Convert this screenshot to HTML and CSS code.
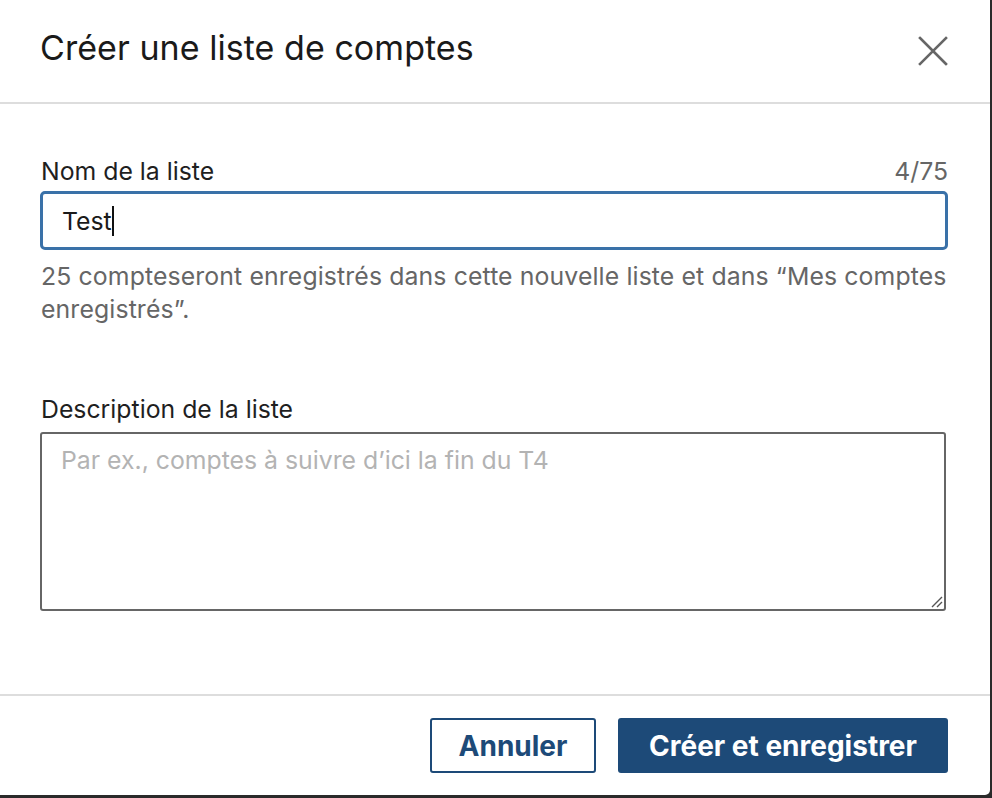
FILE: index.html
```html
<!DOCTYPE html>
<html lang="fr">
<head>
<meta charset="utf-8">
<title>Créer une liste de comptes</title>
<link rel="stylesheet" href="styles.css">
</head>
<body>
<div class="modal">
  <header class="modal-header">
    <h1 class="modal-title">Créer une liste de comptes</h1>
    <button class="close-btn" aria-label="Fermer">
      <svg width="30" height="30" viewBox="0 0 30 30"><path d="M2 2 L28 28 M28 2 L2 28" stroke="#666666" stroke-width="2.6" stroke-linecap="square" fill="none"/></svg>
    </button>
  </header>
  <main class="modal-body">
    <div class="field">
      <div class="label-row">
        <label class="label" for="name">Nom de la liste</label>
        <span class="counter">4/75</span>
      </div>
      <div class="input"><span class="input-text">Test</span><span class="caret"></span></div>
      <p class="helper">25 compteseront enregistrés dans cette nouvelle liste et dans “Mes comptes enregistrés”.</p>
    </div>
    <div class="field field-desc">
      <label class="label">Description de la liste</label>
      <div class="textarea">
        <span class="placeholder">Par ex., comptes à suivre d’ici la fin du T4</span>
        <svg class="grip" width="14" height="14" viewBox="0 0 14 14"><path d="M13 3 L3 13 M13 8 L8 13" stroke="#555" stroke-width="1.4" fill="none"/></svg>
      </div>
    </div>
  </main>
  <footer class="modal-footer">
    <button class="btn btn-secondary">Annuler</button>
    <button class="btn btn-primary">Créer et enregistrer</button>
  </footer>
</div>
</body>
</html>
```
FILE: styles.css
```css
* { box-sizing: border-box; }
html, body { margin: 0; padding: 0; }
body {
  background: #2a2a2a;
  width: 992px;
  height: 798px;
  overflow: hidden;
  font-family: Inter, "Noto Sans", "Liberation Sans", sans-serif;
}
.modal {
  width: 990px;
  height: 795px;
  background: #ffffff;
  border-bottom-right-radius: 5px;
  display: flex;
  flex-direction: column;
}
.modal-header {
  flex: none;
  height: 104px;
  border-bottom: 2px solid #dddddd;
  display: flex;
  align-items: center;
  justify-content: space-between;
  padding: 0 42px 0 40px;
}
.modal-title {
  margin: 0 0 6px 0;
  font-size: 34px;
  line-height: 40px;
  font-weight: 400;
  color: #1a1a1a;
  letter-spacing: 0.05px;
}
.close-btn {
  border: 0;
  background: none;
  padding: 0;
  width: 30px;
  height: 30px;
  display: flex;
}
.modal-body {
  flex: none;
  height: 590px;
  padding: 0 42px 0 40px;
}
.field { padding-top: 53px; }
.field-desc { padding-top: 69px; }
.label-row {
  display: flex;
  justify-content: space-between;
  align-items: baseline;
}
.label {
  font-size: 24.8px;
  color: #1f1f1f;
  line-height: 28px;
  display: block;
  padding-left: 1px;
}
.counter {
  font-size: 24.8px;
  line-height: 28px;
  color: #666666;
}
.input {
  margin-top: 6px;
  height: 59px;
  border: 3px solid #3a71a8;
  border-radius: 5px;
  padding: 0 19px;
  display: flex;
  align-items: center;
}
.input-text {
  font-size: 24.8px;
  color: #1a1a1a;
}
.caret {
  display: inline-block;
  width: 2px;
  height: 30px;
  background: #111;
}
.helper {
  margin: 10px -8px 0 1px;
  font-size: 24.8px;
  letter-spacing: 0.12px;
  line-height: 33px;
  color: #666666;
}
.textarea {
  position: relative;
  margin-top: 9px;
  height: 179px;
  border: 2px solid #666666;
  border-radius: 3px;
  padding: 11px 19px;
  margin-right: 2px;
}
.placeholder {
  font-size: 24.8px;
  color: #b3b3b3;
}
.grip {
  position: absolute;
  right: 1px;
  bottom: 1px;
}
.modal-footer {
  flex: 1;
  border-top: 2px solid #dddddd;
  display: flex;
  justify-content: flex-end;
  align-items: flex-start;
  gap: 22px;
  padding: 22px 42px 0 0;
}
.btn {
  height: 55px;
  border-radius: 3px;
  font-family: Inter, "Noto Sans", "Liberation Sans", sans-serif;
  font-size: 28px;
  font-weight: 700;
  padding: 0;
}
.btn-secondary {
  background: #ffffff;
  border: 2px solid #1d4a78;
  color: #1d4a78;
  width: 166px;
}
.btn-primary {
  background: #1d4a78;
  border: 0;
  color: #ffffff;
  width: 330px;
}
```
